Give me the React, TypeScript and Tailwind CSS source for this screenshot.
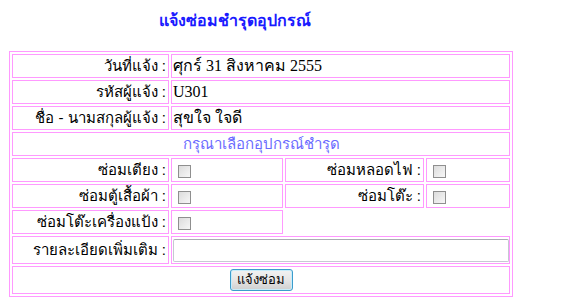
import React from 'react';

const cell = 'border border-[#ff99ff] p-[1px] leading-[20px] h-[24px]';
const label = `${cell} text-right pr-[2px] font-['Liberation_Sans',sans-serif] text-[15px] text-black`;
const value = `${cell} text-left font-['Liberation_Serif',serif] text-[16px] text-black`;

const Check: React.FC = () => (
  <span className="ml-[5px] inline-block w-[13px] h-[13px] align-middle border border-[#8f8f8f] bg-gradient-to-br from-[#dcdcdc] to-[#f7f7f7]" />
);

export default function App() {
  return (
    <div className="w-[580px] h-[306px] bg-white">
      <div className="w-[470px] pt-[10px] text-center font-['Liberation_Sans',sans-serif] text-[16px] font-bold leading-[22px] text-[#1a1aff]">
        แจ้งซ่อมชำรุดอุปกรณ์
      </div>
      <table className="ml-[9px] mt-[19px] w-[504px] table-fixed border border-[#ff99ff] border-separate border-spacing-[2px]">
        <colgroup>
          <col className="w-[157px]" />
          <col className="w-[112px]" />
          <col className="w-[139px]" />
          <col className="w-[84px]" />
        </colgroup>
        <tbody>
          <tr>
            <td className={label}>วันที่แจ้ง :</td>
            <td className={value} colSpan={3}>ศุกร์ 31 สิงหาคม 2555</td>
          </tr>
          <tr>
            <td className={label}>รหัสผู้แจ้ง :</td>
            <td className={value} colSpan={3}>U301</td>
          </tr>
          <tr>
            <td className={label}>ชื่อ - นามสกุลผู้แจ้ง :</td>
            <td className={value} colSpan={3}>สุขใจ ใจดี</td>
          </tr>
          <tr>
            <td colSpan={4} className={`${cell} text-center font-['Liberation_Sans',sans-serif] text-[15px] text-[#6b6bff]`}>
              กรุณาเลือกอุปกรณ์ชำรุด
            </td>
          </tr>
          <tr>
            <td className={label}>ซ่อมเตียง :</td>
            <td className={cell}><Check /></td>
            <td className={label}>ซ่อมหลอดไฟ :</td>
            <td className={cell}><Check /></td>
          </tr>
          <tr>
            <td className={label}>ซ่อมตู้เสื้อผ้า :</td>
            <td className={cell}><Check /></td>
            <td className={label}>ซ่อมโต๊ะ :</td>
            <td className={cell}><Check /></td>
          </tr>
          <tr>
            <td className={label}>ซ่อมโต๊ะเครื่องแป้ง :</td>
            <td className={cell}><Check /></td>
          </tr>
          <tr>
            <td className={`${label} !h-[28px]`}>รายละเอียดเพิ่มเติม :</td>
            <td className={`${cell} !h-[28px]`} colSpan={3}>
              <div className="h-[23px] w-[336px] rounded-[2px] border border-[#c5c9d2] border-t-[#abadb3] bg-white" />
            </td>
          </tr>
          <tr>
            <td colSpan={4} className={`${cell} !h-[28px] text-center`}>
              <button className="h-[22px] w-[63px] align-middle rounded-[3px] border border-[#3c9ccc] bg-gradient-to-b from-[#f2f2f2] via-[#e6e6e6] to-[#cfcfcf] font-['Liberation_Sans',sans-serif] text-[13px] leading-[18px] text-black shadow-[inset_0_0_0_1px_#c7ecfa]">
                แจ้งซ่อม
              </button>
            </td>
          </tr>
        </tbody>
      </table>
    </div>
  );
}
